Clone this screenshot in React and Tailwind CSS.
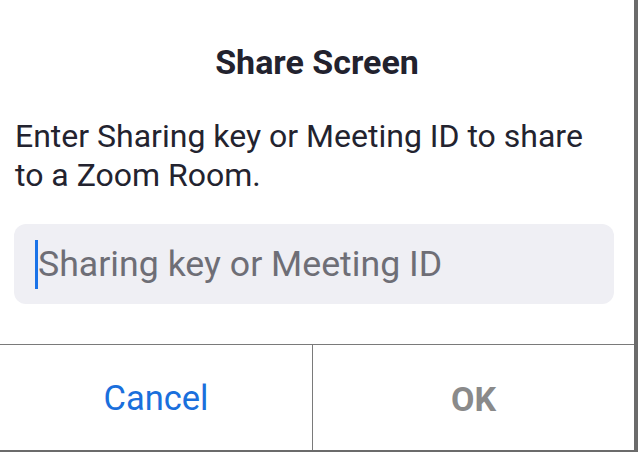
export default function App() {
  return (
    <div className="w-[638px] h-[452px] bg-[#6b6b6b] overflow-hidden" style={{ fontFamily: "Roboto, 'Noto Sans', sans-serif" }}>
      <div className="w-[634px] h-[450px] bg-white flex flex-col">
        <div className="pt-[42px] text-center text-[34px] leading-[40px] font-bold text-[#22222e]">Share Screen</div>
        <div className="mt-[35px] pl-[15px] pr-[36px] text-[32px] leading-[39px] text-[#23232f]">
          Enter Sharing key or Meeting ID to share to a Zoom Room.
        </div>
        <div className="mt-[29px] mx-[14px] w-[600px] h-[80px] rounded-[12px] bg-[#efeff4] flex items-center pl-[21px]">
          <div className="w-[3px] h-[49px] bg-[#1a73e8]"></div>
          <span className="text-[35.7px] leading-[42px] text-[#6e6e76]">Sharing key or Meeting ID</span>
        </div>
        <div className="mt-[40px] border-t border-[#7a7a7a] flex flex-1">
          <div className="w-[313px] border-r border-[#7a7a7a] flex items-center justify-center pt-[3px] text-[34.5px] text-[#1a6fdc]">
            Cancel
          </div>
          <div className="flex-1 flex items-center justify-center pt-[3px] text-[34px] font-bold text-[#8a8a8a]">
            OK
          </div>
        </div>
      </div>
    </div>
  );
}
